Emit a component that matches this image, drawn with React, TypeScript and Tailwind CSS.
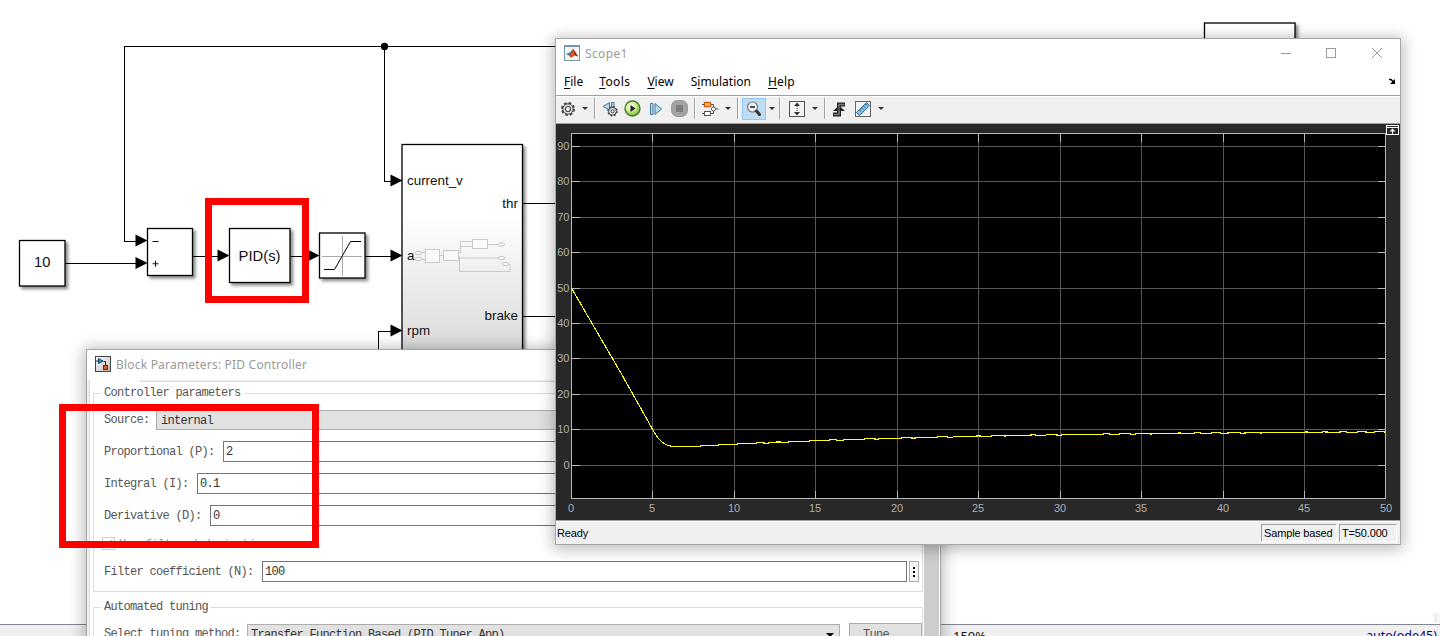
import type { ReactNode } from "react";

const xTicks = [0, 5, 10, 15, 20, 25, 30, 35, 40, 45, 50];
const yTicks = [0, 10, 20, 30, 40, 50, 60, 70, 80, 90];

const sans = "font-['Liberation_Sans',sans-serif]";
const ui = "font-['Noto_Sans','Noto_Sans_CJK_SC',sans-serif]";
const mono = "font-['Liberation_Mono','Noto_Sans_CJK_SC',monospace]";

const plot = { left: 15.5, right: 829.5, top: 9.5, bottom: 374.5, zero: 341.3 };
const toX = (v: number) => Math.floor(plot.left + v * 16.29) + 0.5;
const toY = (v: number) => Math.floor(plot.zero - v * 3.545) + 0.5;

// [time, value] samples of the step response
const samples = [
  [0, 50], [3.1, 25.5], [5, 10], [5.3, 7.7], [5.6, 6.4], [5.9, 5.6], [6.2, 5.3], [7.4, 5.3],
];

const buildCurve = () => {
  const pts = samples.map(([t, v]) => [plot.left + t * 16.28, plot.zero - v * 3.545]);
  for (let t = 7.6; t <= 50.1; t += 0.2) {
    const v = 9.75 - 4.6 * Math.exp(-(t - 7) / 16.5) + 0.1 * Math.sin(t * 5.6);
    pts.push([plot.left + t * 16.28, plot.zero - v * 3.545]);
  }
  return pts.map((p) => `${p[0].toFixed(1)},${p[1].toFixed(1)}`).join(" ");
};

const Arrow = ({ x, y }: { x: number; y: number }) => (
  <path d={`M${x} ${y}l-12 -6v12z`} fill="#000" />
);

interface BlockProps {
  x: number;
  y: number;
  w: number;
  h: number;
  fill?: string;
}

const Block = ({ x, y, w, h, fill = "#fff" }: BlockProps) => (
  <rect x={x} y={y} width={w} height={h} fill={fill} stroke="#000" strokeWidth="1.3" filter="url(#blockShadow)" />
);

const Diagram = () => (
  <svg width="1440" height="636" className={`absolute left-0 top-0 ${sans}`}>
    <defs>
      <linearGradient id="subsystem" x1="0" y1="0" x2="0" y2="1">
        <stop offset="0.3" stopColor="#fff" />
        <stop offset="1" stopColor="#d4d4d4" />
      </linearGradient>
      <filter id="blockShadow" x="-20%" y="-20%" width="150%" height="150%">
        <feDropShadow dx="2.5" dy="2.5" stdDeviation="1.5" floodColor="#000" floodOpacity="0.45" />
      </filter>
    </defs>
    <Block x={19.5} y={240.5} w={45.5} h={45.5} />
    <Block x={147.5} y={228.5} w={45} h={47} />
    <Block x={229.5} y={228.5} w={60.5} h={54} />
    <Block x={319.5} y={233} w={45.5} h={45} />
    <Block x={402} y={144.5} w={120.5} h={230} fill="url(#subsystem)" />
    <Block x={1204.5} y={23} w={90.5} h={60} />

    <g fill="none" stroke="#000" shapeRendering="crispEdges">
      <path d="M556 46.5H124.5V241.5H140" />
      <path d="M384.5 46.5V181.5H392" />
      <path d="M65 263.5H140" />
      <path d="M193 256.5H222M291 256.5H312M365 256.5H395" />
      <path d="M378.5 352V331.5H395" />
      <path d="M523 203.5H560M523 316.5H560" />
    </g>
    <circle cx="384.5" cy="46.5" r="3.7" />
    <Arrow x={147.5} y={240.5} />
    <Arrow x={147.5} y={263} />
    <Arrow x={229.5} y={255.5} />
    <Arrow x={319.5} y={255.5} />
    <Arrow x={402.5} y={180.5} />
    <Arrow x={402.5} y={255.5} />
    <Arrow x={402.5} y={330.5} />

    <path d="M342.5 236V276M322 256.5H362" stroke="#aaa" />
    <path d="M324 269.5H334.5L350.5 241.5H361" fill="none" stroke="#000" strokeWidth="1" />
    <path d="M152.5 241.5H158.5M152.5 263.8H158.5M155.5 260.8V266.8" stroke="#111" strokeWidth="1.1" />

    <g fill="none" stroke="#c9c9c9" strokeWidth="1">
      <path d="M421 252.5H425M421 259.5H425M439.5 255.5H443.5" />
      <path d="M458 255V252.5H460.5V241.5H472.5M460.5 246.5H472.5M487.5 244.5H498M458 258H498.5M459.5 256V271.5H510V264.5H509" />
      <g fill="#f9f9f9">
        <rect x="425.5" y="249.5" width="14" height="13" />
        <rect x="443.5" y="250.5" width="15" height="10" />
        <rect x="472.5" y="239.5" width="15" height="9" />
        <rect x="415.5" y="251.5" width="6" height="3" rx="1.5" />
        <rect x="415.5" y="257.5" width="6" height="3" rx="1.5" />
        <rect x="498.5" y="243" width="6" height="3" rx="1.5" />
        <rect x="498.5" y="256.5" width="6" height="3" rx="1.5" />
        <rect x="502.5" y="262.5" width="6" height="3" rx="1.5" />
      </g>
    </g>

    <g fontSize="13.4" fill="#111">
      <text x="42.2" y="267" fontSize="14.7" textAnchor="middle">10</text>
      <text x="259.5" y="261" fontSize="14.8" textAnchor="middle">PID(s)</text>
      <text x="407" y="185">current_v</text>
      <text x="407" y="260">a</text>
      <text x="407" y="335">rpm</text>
      <text x="518" y="208" textAnchor="end">thr</text>
      <text x="518" y="320" textAnchor="end">brake</text>
    </g>
    <path d="M1434 613H1438V623H1434zM1439 613H1440V623H1439z" fill="#f0f0f0" />
  </svg>
);

const ModelStatusBar = () => (
  <div className={`absolute inset-x-0 top-[624px] flex h-3 items-start justify-between overflow-hidden border-t border-[#828790] bg-[#f0f0f0] pl-[953px] pr-[3px] leading-4 ${ui}`}>
    <span className="mt-[3px] text-[13px] text-[#111]">150%</span>
    <span className="mt-[3px] text-[12.5px] text-[#000080]">auto(ode45)</span>
  </div>
);

interface ParamRowProps {
  label: string;
  labelWidth: string;
  children: ReactNode;
}

const ParamRow = ({ label, labelWidth, children }: ParamRowProps) => (
  <div className="flex h-[21px] items-center">
    <span className={`shrink-0 whitespace-pre ${labelWidth}`}>{label}</span>
    {children}
  </div>
);

const Field = ({ value }: { value: string }) => (
  <div className="flex h-[21px] flex-1 items-center border border-[#767676] bg-white pl-0.5 pt-px text-[#333]">{value}</div>
);

const PidDialog = () => (
  <div className="absolute left-[86px] top-[349px] flex h-[320px] w-[855px] flex-col border border-[#a6a6a6] bg-white shadow-[0_1px_14px_2px_rgba(0,0,0,0.28)]">
    <div className={`flex h-[30px] items-center pl-2 text-xs tracking-[0.2px] text-[#999] ${ui}`}>
      <svg width="16" height="16" viewBox="0 0 16 16" className="mr-[5px] mt-[-2px]">
        <defs>
          <linearGradient id="pidIcon" x1="0" y1="0" x2="1" y2="1">
            <stop offset="0" stopColor="#fff" />
            <stop offset="1" stopColor="#bbb" />
          </linearGradient>
        </defs>
        <rect x="0.5" y="0.5" width="15" height="15" fill="url(#pidIcon)" stroke="#444" />
        <path d="M3.5 2.5L8 5L3.5 7.5z" fill="#2a8ac0" stroke="#124a77" />
        <path d="M1 5H3M8.5 5.500H10.500V9" fill="none" stroke="#222" />
        <rect x="8.5" y="9.5" width="4" height="4" fill="#dd5a22" stroke="#7b2410" />
      </svg>
      <span>Block Parameters: PID Controller</span>
    </div>
    <div className={`flex flex-1 overflow-hidden text-xs leading-[14px] tracking-[-0.7px] text-[#555] ${mono}`}>
      <div className="w-0.5 bg-[#f0f0f0]" />
      <div className="min-w-0 flex-1 border-l border-[#dcdcdc]">
        <div className="ml-[50px] flex border-t border-[#f0f0f0]">
          <div className="h-px w-[114px] border-r border-[#ccc] bg-[#dcdcdc]" />
          <div className="h-px flex-1 bg-[#dcdcdc]" />
        </div>
        <fieldset className="ml-[3px] mr-px mt-1 h-[206px] border border-[#dcdcdc]">
          <legend className="ml-[7px] px-[3px]">Controller parameters</legend>
          <div className="ml-2.5 mt-[9px] flex flex-col gap-[11px]">
            <ParamRow label="Source:" labelWidth="w-[52px]">
              <div className="mr-4 flex h-5 flex-1 items-center border border-[#adadad] bg-[#e1e1e1] pl-1 pt-0.5 text-[#333]">internal</div>
            </ParamRow>
            <div className="mr-4 flex flex-col gap-[11px]">
              <ParamRow label="Proportional (P):" labelWidth="w-[119px]">
                <Field value="2" />
              </ParamRow>
              <ParamRow label="Integral (I):" labelWidth="w-[93px]">
                <Field value="0.1" />
              </ParamRow>
              <ParamRow label="Derivative (D):" labelWidth="w-[106px]">
                <Field value="0" />
              </ParamRow>
            </div>
            <div className="-ml-0.5 flex h-[13px] items-center text-[#999]">
              <span className="mr-1 flex h-[13px] w-[13px] items-center justify-center border border-[#ccc]">
                <svg width="9" height="9" viewBox="0 0 9 9">
                  <path d="M1 4.5L3.5 7L8 1" fill="none" stroke="#bbb" strokeWidth="1.5" />
                </svg>
              </span>
              <span className="pt-0.5">Use filtered derivative</span>
            </div>
            <div className="mr-[3px] flex gap-0.5">
              <div className="flex-1">
                <ParamRow label="Filter coefficient (N):" labelWidth="w-[158px]">
                  <Field value="100" />
                </ParamRow>
              </div>
              <div className="flex h-[21px] w-2.5 flex-col items-center justify-center gap-0.5 border border-[#adadad] bg-[#f5f5f5]">
                <i className="h-0.5 w-0.5 bg-black" />
                <i className="h-0.5 w-0.5 bg-black" />
                <i className="h-0.5 w-0.5 bg-black" />
              </div>
            </div>
          </div>
        </fieldset>
        <fieldset className="ml-[3px] mr-px mt-2 h-[100px] border border-[#dcdcdc]">
          <legend className="ml-[7px] px-[3px]">Automated tuning</legend>
          <div className="ml-2.5 mt-[9px] flex items-start">
            <span className="mt-1 w-[143px] shrink-0">Select tuning method:</span>
            <div className="mt-px flex h-[21px] w-[593px] items-center justify-between border border-[#adadad] bg-[#e1e1e1] pl-[3px] pr-[5px] text-[#333]">
              <span>Transfer Function Based (PID Tuner App)</span>
              <i className="h-0 w-0 border-x-4 border-t-4 border-x-transparent border-t-black" />
            </div>
            <div className="ml-[9px] flex h-[23px] w-[73px] items-center border border-[#adadad] bg-[#e1e1e1] pl-[13px]">Tune...</div>
          </div>
        </fieldset>
      </div>
      <div className="w-[15px] bg-[#cdcdcd]" />
      <div className="w-px bg-white" />
    </div>
  </div>
);

const Caret = () => (
  <i className="h-0 w-0 border-x-[3px] border-t-[3px] border-x-transparent border-t-[#333]" />
);

const Separator = () => (
  <span className="h-[21px] w-0.5 border-l border-r border-l-[#a0a0a0] border-r-white" />
);

const GearIcon = () => (
  <svg width="16" height="16" viewBox="0 0 16 16">
    <circle cx="8" cy="8" r="6" fill="none" stroke="#444" strokeWidth="2" strokeDasharray="2.6 2.1" />
    <circle cx="8" cy="8" r="5.2" fill="#ddd" stroke="#444" />
    <circle cx="8" cy="8" r="2.5" fill="#fff" stroke="#444" strokeWidth="1.2" />
  </svg>
);

const StepBackIcon = () => (
  <svg width="16" height="16" viewBox="0 0 16 16">
    <path d="M7.5 1.5V9L1 5.500z" fill="#b5d8ef" stroke="#41799f" />
    <path d="M9.5 1.5H12V6H9.5z" fill="#b5d8ef" stroke="#41799f" />
    <circle cx="10.5" cy="10.3" r="4.5" fill="none" stroke="#444" strokeWidth="1.6" strokeDasharray="1.9 1.63" />
    <circle cx="10.5" cy="10.3" r="3.9" fill="#ddd" stroke="#444" strokeWidth="0.9" />
    <circle cx="10.5" cy="10.3" r="1.5" fill="#fff" stroke="#444" />
  </svg>
);

const RunIcon = () => (
  <svg width="17" height="17" viewBox="0 0 17 17">
    <defs>
      <radialGradient id="runGreen" cx="0.4" cy="0.35" r="0.65">
        <stop offset="0" stopColor="#fff" />
        <stop offset="0.5" stopColor="#d4ef9c" />
        <stop offset="1" stopColor="#76b82e" />
      </radialGradient>
    </defs>
    <circle cx="8.5" cy="8.5" r="7.5" fill="url(#runGreen)" stroke="#3f7d20" strokeWidth="1.3" />
    <path d="M6.5 5L11.5 8.5L6.5 12z" fill="#222" />
  </svg>
);

const StepForwardIcon = () => (
  <svg width="14" height="14" viewBox="0 0 14 14">
    <path d="M1.5 1.5H4V12.5H1.5zM6 1.5L12.5 7L6 12.5z" fill="#b5d8ef" stroke="#41799f" />
  </svg>
);

const StopIcon = () => (
  <svg width="17" height="17" viewBox="0 0 17 17">
    <rect x="0.5" y="0.5" width="16" height="16" rx="6" fill="#a3a3a3" stroke="#999" />
    <rect x="5" y="5" width="7" height="7" fill="#7c7c7c" />
  </svg>
);

const SignalIcon = () => (
  <svg width="17" height="16" viewBox="0 0 17 16">
    <rect x="1" y="0" width="9" height="7" rx="2" fill="#ffd48a" />
    <path d="M0 3.5H2M9 3.5H11.5V7M0 12.5H2M8 12.5H11.5V9.5M14 8H16.5" fill="none" stroke="#555" />
    <rect x="2.5" y="1.5" width="6" height="4" fill="#ffad52" stroke="#c95a12" />
    <rect x="2.5" y="10.5" width="6" height="4" fill="#fff" stroke="#555" />
    <circle cx="11.5" cy="8" r="2" fill="#fff" stroke="#555" />
  </svg>
);

const ZoomOutIcon = () => (
  <svg width="16" height="16" viewBox="0 0 16 16">
    <circle cx="6.5" cy="6" r="5" fill="#f1f6fc" stroke="#777" strokeWidth="1.2" />
    <path d="M4 6H9" stroke="#111" strokeWidth="1.5" />
    <path d="M10.5 10L13.5 13.5" stroke="#333" strokeWidth="3" strokeLinecap="round" />
  </svg>
);

const FitIcon = () => (
  <svg width="16" height="16" viewBox="0 0 16 16">
    <rect x="0.5" y="0.5" width="15" height="15" fill="#f3f3f3" stroke="#555" />
    <path d="M8 1.5L11 5H5zM8 14.5L11 11H5z" fill="#333" />
    <path d="M8 5V11" stroke="#333" strokeDasharray="1 1" />
  </svg>
);

const TriggerIcon = () => (
  <svg width="14" height="16" viewBox="0 0 14 16">
    <path d="M1 13.5H7V3.5H13" fill="none" stroke="#222" strokeWidth="4" />
    <path d="M1.5 13.5H7V3.5H12.5" fill="none" stroke="#777" strokeWidth="1.5" />
    <path d="M7 4.5L13 10H1z" fill="#222" />
    <path d="M7 3.5V12" stroke="#777" strokeWidth="1.2" />
  </svg>
);

const MeasureIcon = () => (
  <svg width="16" height="16" viewBox="0 0 16 16">
    <rect x="0.5" y="0.5" width="15" height="15" fill="#f3f3f3" stroke="#666" />
    <path d="M1.5 11.5L11.5 1.5L14.5 4.5L4.5 14.5z" fill="#8fc3e6" stroke="#2c6590" />
    <path d="M4.5 9L6 10.5M6.5 7L8 8.5M8.5 5L10 6.5M10.5 3L12 4.5" stroke="#1c4560" />
  </svg>
);

const menus = [
  { name: "File", key: 0, style: "mr-4" },
  { name: "Tools", key: 0, style: "mr-[17px] tracking-[0.4px]" },
  { name: "View", key: 0, style: "mr-[17px]" },
  { name: "Simulation", key: 1, style: "mr-[17px]" },
  { name: "Help", key: 0, style: "tracking-[0.2px]" },
];

const ScopePlot = () => (
  <svg width="844" height="396" className={`block bg-[#282828] ${sans}`}>
    <rect x={plot.left} y={plot.top} width={plot.right - plot.left} height={plot.bottom - plot.top} fill="#000" />
    <g stroke="#575757" shapeRendering="crispEdges">
      {xTicks.slice(1, -1).map((t) => (
        <path key={t} d={`M${toX(t)} ${plot.top}V${plot.bottom}`} />
      ))}
      {yTicks.map((t) => (
        <path key={t} d={`M${plot.left} ${toY(t)}H${plot.right}`} />
      ))}
    </g>
    <g stroke="#b8b8b8" fill="none" shapeRendering="crispEdges">
      {xTicks.slice(1, -1).map((t) => (
        <path key={t} d={`M${toX(t)} ${plot.top}v8M${toX(t)} ${plot.bottom}v-8`} />
      ))}
      {yTicks.map((t) => (
        <path key={t} d={`M${plot.left} ${toY(t)}h8M${plot.right} ${toY(t)}h-8`} />
      ))}
      <rect x={plot.left} y={plot.top} width={plot.right - plot.left} height={plot.bottom - plot.top} />
    </g>
    <polyline points={buildCurve()} fill="none" stroke="#ffff1a" strokeWidth="1.1" shapeRendering="crispEdges" />
    <g fontSize="11" fill="#afafaf">
      {yTicks.map((t) => (
        <text key={t} x="13.5" y={toY(t) + 3.5} textAnchor="end">{t}</text>
      ))}
      {xTicks.map((t) => (
        <text key={t} x={toX(t) - 0.5} y="388" textAnchor="middle">{t}</text>
      ))}
    </g>
    <g transform="translate(830 1)" fill="none" stroke="#fff">
      <rect x="0.5" y="0.5" width="12" height="9" fill="#282828" />
      <path d="M1 2.5H12M6.5 9V5" />
      <path d="M6.5 3.5L9.5 6.5H3.5z" fill="#fff" stroke="none" />
    </g>
  </svg>
);

const ScopeWindow = () => (
  <div className="absolute left-[555px] top-[38px] flex h-[507px] w-[846px] flex-col border border-[#a6a6a6] bg-white shadow-[0_2px_14px_2px_rgba(0,0,0,0.28)]">
    <div className={`flex h-7 items-center pl-2 text-xs tracking-[0.35px] text-[#999] ${ui}`}>
      <svg width="16" height="16" viewBox="0 0 16 16" className="mr-[5px]">
        <rect x="0.5" y="0.5" width="15" height="15" fill="#f4f4f4" stroke="#7894a8" />
        <path d="M0.5 1.5H15.5" stroke="#7894a8" />
        <path d="M2 9L5.5 7.5L9 4L7 11.5L5 10.5z" fill="#3a7eb5" />
        <path d="M9 3.5L14 11.5L10.5 10.5L7 13L5 10.5L7.5 8z" fill="#d9531e" />
        <path d="M9 3.5L14 11.5L11 10z" fill="#8b1e12" />
      </svg>
      <span className="mt-0.5">Scope1</span>
      <svg width="102" height="14" viewBox="0 0 102 14" className="ml-auto mr-[17px] shrink-0" fill="none" stroke="#999">
        <path d="M0 7.5H10" />
        <rect x="45.5" y="2.5" width="9" height="9" />
        <path d="M91 2L101 12M101 2L91 12" />
      </svg>
    </div>
    <div className={`flex h-7 items-center pl-2 pt-0.5 text-xs text-black ${ui}`}>
      {menus.map(({ name, key, style }) => (
        <span key={name} className={style}>
          {name.slice(0, key)}
          <u className="underline-offset-2">{name[key]}</u>
          {name.slice(key + 1)}
        </span>
      ))}
      <svg width="8" height="7" viewBox="0 0 8 7" className="-mt-0.5 ml-auto mr-1">
        <path d="M1 1.5H3L5.5 4" fill="none" stroke="#000" strokeWidth="1.5" />
        <path d="M7 1V6H2z" />
      </svg>
    </div>
    <div className="flex h-[29px] shrink-0 items-center border-b border-t border-b-[#a0a0a0] border-t-[#a0a0a0] bg-[#f0f0f0] pb-0.5 pl-1 shadow-[inset_0_1px_0_#fff]">
      <GearIcon />
      <span className="ml-1.5 mr-1.5 flex"><Caret /></span>
      <Separator />
      <span className="ml-1.5"><StepBackIcon /></span>
      <span className="ml-1.5"><RunIcon /></span>
      <span className="ml-2"><StepForwardIcon /></span>
      <span className="ml-2"><StopIcon /></span>
      <span className="ml-1.5 flex"><Separator /></span>
      <span className="ml-1.5"><SignalIcon /></span>
      <span className="ml-1.5 mr-1.5 flex"><Caret /></span>
      <Separator />
      <span className="ml-[3px] flex h-[22px] w-6 items-center justify-center border border-[#90c8f6] bg-[#c0dcf3]">
        <ZoomOutIcon />
      </span>
      <span className="ml-[3px] mr-1 flex"><Caret /></span>
      <Separator />
      <span className="ml-2"><FitIcon /></span>
      <span className="ml-[7px] mr-1.5 flex"><Caret /></span>
      <Separator />
      <span className="ml-1.5"><TriggerIcon /></span>
      <span className="ml-[9px]"><MeasureIcon /></span>
      <span className="ml-[7px] flex"><Caret /></span>
    </div>
    <ScopePlot />
    <div className={`flex flex-1 items-center border-t border-[#a0a0a0] bg-[#f0f0f0] pl-px pr-[3px] text-[11px] tracking-[-0.15px] text-black shadow-[inset_0_1px_0_#fff] ${sans}`}>
      <span className="mt-0.5">Ready</span>
      <div className="ml-auto flex gap-0.5">
        <span className="flex h-[18px] w-[76px] items-center whitespace-nowrap border border-b-white border-l-[#a0a0a0] border-r-white border-t-[#a0a0a0] pl-0.5 pt-0.5">Sample based</span>
        <span className="flex h-[18px] w-[58px] items-center border border-b-white border-l-[#a0a0a0] border-r-white border-t-[#a0a0a0] pl-0.5 pt-0.5">T=50.000</span>
      </div>
    </div>
  </div>
);

export default function App() {
  return (
    <div className="relative h-[636px] w-[1440px] overflow-hidden bg-white">
      <Diagram />
      <ModelStatusBar />
      <PidDialog />
      <ScopeWindow />
      {/* red highlight frames */}
      <div className="absolute left-[205px] top-[198px] h-[105px] w-[104px] border-[7px] border-[#ff0000]" />
      <div className="absolute left-[59px] top-[404px] h-36 w-[260px] border-[7px] border-[#ff0000]" />
    </div>
  );
}
